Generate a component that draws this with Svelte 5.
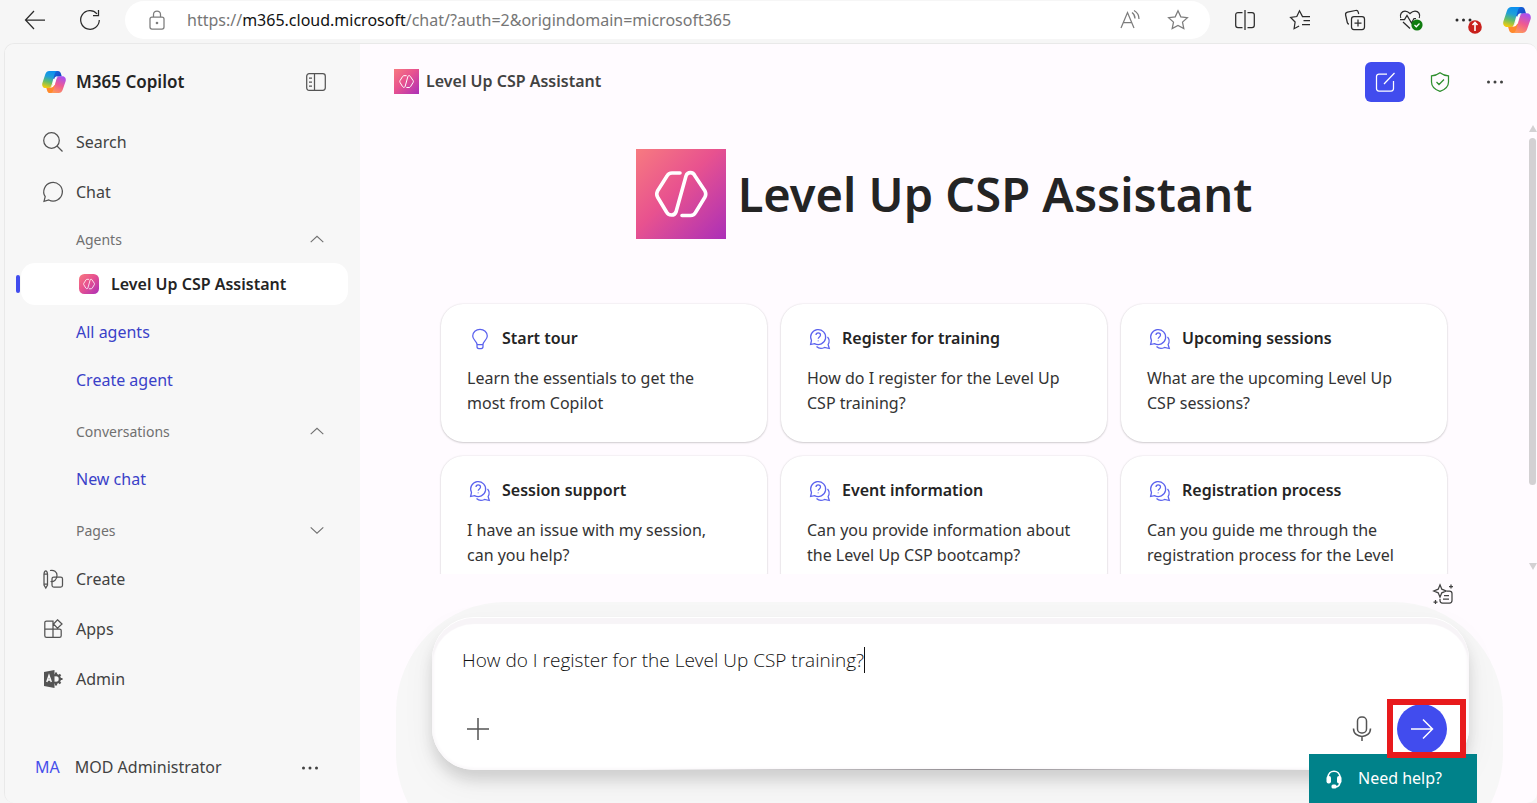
<script>
  let prompt = $state('How do I register for the Level Up CSP training?');

  const cards = [
    { icon: 'bulb', title: 'Start tour', text: 'Learn the essentials to get the most from Copilot' },
    { icon: 'ask', title: 'Register for training', text: 'How do I register for the Level Up CSP training?' },
    { icon: 'ask', title: 'Upcoming sessions', text: 'What are the upcoming Level Up CSP sessions?' },
    { icon: 'ask', title: 'Session support', text: 'I have an issue with my session, can you help?' },
    { icon: 'ask', title: 'Event information', text: 'Can you provide information about the Level Up CSP bootcamp?' },
    { icon: 'ask', title: 'Registration process', text: 'Can you guide me through the registration process for the Level' }
  ];
</script>

{#snippet copilot(id, size)}
  <svg width={size} height={size} viewBox="0 -2 80 80" aria-hidden="true">
    <defs>
      <linearGradient id="{id}a" x1="0.6" y1="0" x2="0.35" y2="1">
        <stop offset="0" stop-color="#0a8ff0" /><stop offset=".35" stop-color="#1f9fd8" />
        <stop offset=".65" stop-color="#62bd6a" /><stop offset="1" stop-color="#f3cb0c" />
      </linearGradient>
      <linearGradient id="{id}b" x1="0.7" y1="0" x2="0.3" y2="1">
        <stop offset="0" stop-color="#a950f0" /><stop offset=".5" stop-color="#ee5a93" /><stop offset="1" stop-color="#ff9a58" />
      </linearGradient>
      <linearGradient id="{id}c" x1="0" y1="0" x2="1" y2="1">
        <stop offset="0" stop-color="#0f6fe0" /><stop offset="1" stop-color="#1b3bbd" />
      </linearGradient>
    </defs>
    <path d="M42 1h11c6 0 8 3 10 9l3 10h-9c-8 0-11 4-13 11l-9-6z" fill="url(#{id}c)" />
    <path d="M38 75H27c-6 0-8-3-10-9l-3-10h9c8 0 11-4 13-11l9 6z" fill="#ff8a2c" />
    <path d="M24 1h28c-6 0-8 5-10 11L32 48c-2 7-5 10-12 10h-8C3 58-1 50 1 42l10-30C14 4 18 1 24 1z" fill="url(#{id}a)" />
    <path d="M56 75H28c6 0 8-5 10-11l10-35c2-7 5-10 12-10h8c9 0 13 8 11 16L69 64c-3 8-7 11-13 11z" fill="url(#{id}b)" />
    <path d="M41 27c2-6 6-9 14-9-6 2-7 7-9 13l-5 16c-2 7-6 10-15 10 6-2 8-7 10-13z" fill="#fff" />
  </svg>
{/snippet}

{#snippet agent(id, size, radius)}
  <svg width={size} height={size} viewBox="0 0 90 90" aria-hidden="true">
    <defs>
      <linearGradient id={id} x1="0" y1="0" x2="1" y2="1">
        <stop offset="0" stop-color="#f77a80" /><stop offset=".45" stop-color="#e8528f" /><stop offset="1" stop-color="#ab2fb8" />
      </linearGradient>
    </defs>
    <rect width="90" height="90" rx={radius} fill="url(#{id})" />
    <path d="M44 24h-8c-2 0-4 1-5 3L21.500 42c-1 2-1 4 0 6l9 15c2 4 8 4 9.500 0L50 27c1.500-4.500 7-4.500 9 0l10 15c1 2 1 4 0 6l-9.500 15.500c-1 2-3 3-5 3H46" fill="none" stroke="#fff" stroke-width="3.600" stroke-linecap="round" stroke-linejoin="round" />
  </svg>
{/snippet}

{#snippet dots()}
  <svg class="icon" viewBox="0 0 20 20" aria-hidden="true"><g fill="currentColor" stroke="none"><circle cx="3.500" cy="10" r="1.500" /><circle cx="10" cy="10" r="1.500" /><circle cx="16.500" cy="10" r="1.500" /></g></svg>
{/snippet}

{#snippet chevron(down)}
  <svg class="icon" viewBox="0 0 20 20" aria-hidden="true"><path d={down ? 'M3 7l7 6.500L17 7' : 'M3 13.500L10 7l7 6.500'} /></svg>
{/snippet}

<div class="window">
  <header class="toolbar">
    <button class="tool" aria-label="Back"><svg class="icon" viewBox="0 0 20 20"><path d="M20 10H1M9 1L.5 10 9 19" /></svg></button>
    <button class="tool" aria-label="Refresh"><svg class="icon" viewBox="0 0 20 20"><path d="M19.300 10A9.300 9.300 0 1 1 17 3.800M18.500 0v5.500H13" /></svg></button>
    <div class="address">
      <svg class="icon grey" viewBox="0 0 20 20" aria-hidden="true"><rect x="3" y="7" width="14" height="12" rx="2" /><path d="M6.500 7V4.500a3.500 3.500 0 0 1 7 0V7" /><circle cx="10" cy="13" r=".7" fill="currentColor" /></svg>
      <span class="url">https://<b>m365.cloud.microsoft</b>/chat/?auth=2&amp;origindomain=microsoft365</span>
      <button class="tool grey" aria-label="Read aloud"><svg class="icon" viewBox="0 0 20 20"><path d="M1 18L7.500 2.500 14 18M3.300 12.500h8.400M12 2.500c2 1.500 3 3.500 3 6M14 .5c3.500 2 5 5 5 8.500" /></svg></button>
      <button class="tool grey" aria-label="Add to favorites"><svg class="icon" viewBox="0 0 20 20"><path d="M10 .8l2.800 6 6.600.8-4.900 4.500 1.300 6.500-5.800-3.200-5.800 3.200 1.300-6.500L.6 7.600l6.600-.8z" /></svg></button>
    </div>
    <button class="tool" aria-label="Split screen"><svg class="icon" viewBox="0 0 20 20"><path d="M10 0v20M7.500 2.500H3a2.300 2.300 0 0 0-2.300 2.300v10.400A2.300 2.300 0 0 0 3 17.500h4.500M12.500 2.500H17a2.300 2.300 0 0 1 2.300 2.300v10.400a2.300 2.300 0 0 1-2.300 2.300h-4.500" /></svg></button>
    <button class="tool" aria-label="Favorites"><svg class="icon" viewBox="0 0 20 20"><path d="M20 6.500h-7.500L9.500.8 6.800 6.500l-6.200 1 4.500 4.500-1 6.700 5-2.700M13.500 10.500H20M12 14.500h8" /></svg></button>
    <button class="tool" aria-label="Collections"><svg class="icon" viewBox="0 0 20 20"><rect x="6.500" y="6.500" width="13" height="13" rx="2.500" /><path d="M13 9.500v7M9.500 13h7M4 14c-1 0-1.500-.6-1.700-1.500L.6 5C.3 3.500 1 2.500 2.500 2.200L10.500.5c1.500-.3 2.500.4 2.800 1.800l.4 1.700" /></svg></button>
    <button class="tool" aria-label="Browser essentials">
      <svg class="icon" viewBox="0 0 20 20"><path d="M.8 8C-.7 4.500 2 1 5 1c2 0 3.500 1 5 2.500C11.500 2 13 1 15 1c3.500 0 5.700 3.500 4.200 7M0 9.500h4.500l2.500-4 4.500 7.500L14 8.500h2M3 12l7 6.500" /><circle cx="17" cy="15" r="5.600" fill="#107c10" stroke="none" /><path d="M14.500 15l1.800 1.800 3.200-3.300" stroke="#fff" /></svg>
    </button>
    <button class="tool" aria-label="Settings and more">
      <svg class="icon" viewBox="0 0 20 20"><g fill="currentColor" stroke="none"><circle cx="2" cy="10" r="1.500" /><circle cx="8.500" cy="10" r="1.500" /><circle cx="15" cy="10" r="1.500" /></g><circle cx="20" cy="17" r="6.800" fill="#c9201c" stroke="none" /><path d="M20 21v-8M17.500 15l2.500-2.500 2.500 2.500" stroke="#fff" stroke-width="1.600" /></svg>
    </button>
    <button class="tool last" aria-label="Copilot">{@render copilot('top', 28)}</button>
  </header>

  <div class="app">
    <nav class="sidebar">
      <div class="brand">
        {@render copilot('side', 24)}
        <strong>M365 Copilot</strong>
        <button class="end" aria-label="Collapse navigation"><svg class="icon" viewBox="0 0 20 20"><rect x=".7" y="1.700" width="18.600" height="16.600" rx="2.500" /><path d="M8.500 2v16M3 6h3M3 10h3M3 14h3" /></svg></button>
      </div>
      <a class="item" href="#search"><svg class="icon" viewBox="0 0 20 20"><circle cx="8.500" cy="8.500" r="7.800" /><path d="M14 14l5.500 5.500" /></svg>Search</a>
      <a class="item" href="#chat"><svg class="icon" viewBox="0 0 20 20"><path d="M1 19.300l1.200-4.600A9.300 9.300 0 1 1 5.800 18z" /></svg>Chat</a>

      <button class="section agents">Agents {@render chevron(false)}</button>
      <a class="active" href="#agent" aria-current="page">{@render agent('g1', 20, 24)}Level Up CSP Assistant</a>
      <a class="sub first" href="#all">All agents</a>
      <a class="sub" href="#create-agent">Create agent</a>
      <button class="section">Conversations {@render chevron(false)}</button>
      <a class="sub" href="#new">New chat</a>
      <button class="section">Pages {@render chevron(true)}</button>

      <a class="item" href="#create"><svg class="icon" viewBox="0 0 20 20"><path d="M1 5v11l1.800 3L4.500 16V5M1 5a1.800 4 0 0 1 3.500 0zM1 15h3.500M7 1.500c4-1 7 1.500 7 5 0 4-3 6.500-6.500 6" /><rect x="9" y="8" width="10.500" height="10" rx="1.800" /></svg>Create</a>
      <a class="item" href="#apps"><svg class="icon" viewBox="0 0 20 20"><path d="M10 10V2H3.500A1.700 1.700 0 0 0 1.800 3.700v13a1.700 1.700 0 0 0 1.700 1.700h13a1.700 1.700 0 0 0 1.700-1.700v-5a1.700 1.700 0 0 0-1.700-1.700H1.800M10 10v8.400M14.500.8l4.500 4.200-4.500 4.200L10.500 5z" /></svg>Apps</a>
      <a class="item" href="#admin">
        <svg class="icon" viewBox="0 0 20 20"><circle cx="13" cy="10" r="4" stroke-width="2" /><path d="M13 3.500v13M19.500 10H13M17.500 5.500L13 10l4.500 4.500" stroke-width="2.200" /><circle cx="13" cy="10" r="2.700" fill="#f7f7f7" stroke="none" /><path d="M1 3L11.500 1v18L1 17z" fill="currentColor" stroke="none" /><path d="M3.800 13l2.200-6.500L8.300 13M4.600 11h3" stroke="#f7f7f7" stroke-width="1.500" /></svg>Admin</a>

      <div class="user">
        <span class="initials">MA</span>
        <span>MOD Administrator</span>
        <button class="end" aria-label="Account options">{@render dots()}</button>
      </div>
    </nav>

    <main>
      <div class="bar">
        {@render agent('g2', 25, 0)}
        <strong>Level Up CSP Assistant</strong>
        <div class="actions">
          <button class="new" aria-label="New chat"><svg class="icon" viewBox="0 0 20 20"><path d="M12 2H4a2.500 2.500 0 0 0-2.500 2.500v12A2.500 2.500 0 0 0 4 19h12a2.500 2.500 0 0 0 2.500-2.500V9M19.500 1L9 12" /></svg></button>
          <button class="shield" aria-label="Enterprise data protection"><svg class="icon" viewBox="0 0 20 20"><path d="M10 .8c2.500 2 5.200 2.900 8.500 3V10c0 4.500-3 7.500-8.500 9.300C4.500 17.500 1.500 14.500 1.500 10V3.800c3.300-.1 6-1 8.500-3zM6.500 10l2.500 2.500L14 7.500" /></svg></button>
          <button aria-label="More options">{@render dots()}</button>
        </div>
      </div>

      <div class="viewport">
        <div class="content">
          <h1>{@render agent('g3', 90, 0)}Level Up CSP Assistant</h1>
          <div class="cards">
            {#each cards as card}
              <button class="card">
                <span class="card-title">
                  {#if card.icon === 'bulb'}
                    <svg class="icon" viewBox="0 0 20 20"><path d="M7 15.500C7 12 2.700 11 2.700 7a7.300 6.600 0 0 1 14.600 0c0 4-4.300 5-4.300 8.500zM7 15.500v2c0 1 .8 2 1.800 2h2.400c1 0 1.800-1 1.800-2v-2" /></svg>
                  {:else}
                    <svg class="icon" viewBox="0 0 20 20"><path d="M.6 15.500l.9-4A7.500 7.500 0 1 1 4.500 14.600zM6 6c0-3 4.500-3 4.500 0 0 2-2.300 1.800-2.300 3.800M8.200 11.500v.8M6.500 17.500c2 2 5 2.500 8 1l4.800 1-1.200-4c1.500-2.500 1.200-5.500-.6-7.500" /></svg>
                  {/if}
                  {card.title}
                </span>
                <span class="card-text">{card.text}</span>
              </button>
            {/each}
          </div>
        </div>
        <div class="scrollbar" aria-hidden="true"><i class="up"></i><i class="thumb"></i><i class="down"></i></div>
      </div>

      <div class="compose-area">
        <button class="prompts" aria-label="View prompts"><svg class="icon" viewBox="0 0 20 20"><path d="M7 .8l1.800 4.400 4.400 1.800-4.400 1.800L7 13.200 5.200 8.800.8 7l4.400-1.800zM18 .5v4M16 2.500h4M2.500 16v4M.5 18h4M14 7h2.500A2.500 2.500 0 0 1 19 9.500v7a2.500 2.500 0 0 1-2.500 2.500h-7A2.500 2.500 0 0 1 7 16.500V15M11 11.500h5M10 15h6" /></svg></button>
        <form class="composer" onsubmit={(e) => e.preventDefault()}>
          <div class="field">
            <input aria-label="Message Copilot" bind:value={prompt} />
            <span class="caret"></span>
          </div>
          <div class="controls">
            <button type="button" aria-label="Add content"><svg class="icon plus" viewBox="0 0 24 24"><path d="M12 1v22M1 12h22" /></svg></button>
            <button type="button" class="mic" aria-label="Dictate"><svg class="icon plus" viewBox="0 0 24 24"><rect x="7.500" y="0" width="9" height="16" rx="4" /><path d="M3.500 11.500c0 10.500 17 10.500 17 0M12 19.500V24" /></svg></button>
            <div class="send-wrap">
              <button class="send" aria-label="Send"><svg class="icon plus" viewBox="0 0 24 24"><path d="M1 12h22M13 2.500L22.500 12 13 21.500" /></svg></button>
              <span class="mark"></span>
            </div>
          </div>
        </form>
        <button class="help">
          <svg class="icon" viewBox="0 0 20 20"><path d="M4 9C4 0 16 0 16 9v3c0 4-2 6-4.500 6" stroke-width="1.600" /><rect x="2.500" y="7" width="4.500" height="7.500" rx="2" fill="currentColor" stroke="none" /><rect x="13" y="7" width="4.500" height="7.500" rx="2" fill="currentColor" stroke="none" /><rect x="7.500" y="15.500" width="5" height="4" rx="1.500" fill="currentColor" stroke="none" /></svg>
          Need help?
        </button>
      </div>
    </main>
  </div>
</div>

<style>
  :global(body) { margin: 0; background: #f6f6f6; }
  .window, .window * { box-sizing: border-box; }
  .window {
    display: flex;
    flex-direction: column;
    height: 100vh;
    font: 16px/25px "Noto Sans", "Open Sans", sans-serif;
    color: #424242;
    overflow: hidden;
  }
  button, input { font: inherit; color: inherit; background: none; border: 0; padding: 0; margin: 0; }
  button { display: flex; align-items: center; justify-content: center; cursor: pointer; }
  a { text-decoration: none; color: inherit; }
  strong, b { font-weight: 600; }
  svg { flex: none; display: block; overflow: visible; }
  .icon { width: 20px; height: 20px; fill: none; stroke: currentColor; stroke-width: 1.25; }
  .icon.plus { width: 24px; height: 24px; stroke-width: 1.5; }

  .toolbar { display: flex; align-items: center; gap: 27px; height: 43px; padding: 0 6px 3px 21px; color: #2b2b2b; }
  .tool { width: 28px; height: 28px; flex: none; }
  .tool.last { margin-left: -3px; }
  .grey { color: #7c7c7c; }
  .address {
    flex: 1;
    min-width: 0;
    display: flex;
    align-items: center;
    height: 38px;
    margin: 0 -6px 0 -6px;
    padding: 0 18px 0 22px;
    gap: 20px;
    border-radius: 20px;
    background: #fff;
  }
  .url { flex: 1; min-width: 0; overflow: hidden; white-space: nowrap; color: #767676; }
  .url b { font-weight: 400; color: #111; }

  .app {
    flex: 1;
    min-height: 0;
    display: flex;
    margin-left: 4px;
    border: 1px solid #e9e9e9;
    border-right: 0;
    border-bottom: 0;
    border-radius: 10px;
    overflow: hidden;
  }

  .sidebar { width: 355px; flex: none; display: flex; flex-direction: column; background: #f7f7f7; }
  .brand, .item, .user { display: flex; align-items: center; }
  .brand { height: 73px; padding: 2px 34px 0 37px; gap: 10px; color: #242424; font-size: 17px; }
  .brand .icon, .item .icon { color: #545454; }
  .end { margin-left: auto; }
  .item { height: 50px; padding-left: 38px; gap: 13px; }
  .section { height: 48px; margin-top: 3px; padding: 0 34px 0 71px; justify-content: space-between; font-size: 14px; color: #707070; }
  .section.agents { height: 44px; margin: 0 0 2px; }
  .active {
    position: relative;
    display: flex;
    align-items: center;
    gap: 12px;
    height: 42px;
    margin: 0 12px 0 16px;
    padding-left: 58px;
    border-radius: 14px;
    background: #fff;
    color: #242424;
    font-weight: 600;
  }
  .active::before { content: ""; position: absolute; left: -5px; top: 12px; width: 4px; height: 18px; border-radius: 2px; background: #414cee; }
  .sub { height: 48px; padding-left: 71px; line-height: 48px; color: #3a41c8; }
  .sub.first { margin-top: 3px; }
  .section .icon { width: 18px; height: 18px; }
  .user { margin: auto 0 0; padding: 0 40px 23px 30px; gap: 15px; }
  .initials { color: #464feb; }

  main { position: relative; flex: 1; min-width: 0; display: flex; flex-direction: column; background: #fffbff; }
  .bar { flex: none; display: flex; align-items: center; height: 75px; gap: 7px; padding: 0 22px 0 34px; }
  .actions { margin-left: auto; display: flex; gap: 15px; }
  .actions button { width: 40px; height: 40px; border-radius: 6px; }
  .actions .new { background: #414cee; color: #fff; }
  .actions .shield { color: #2f8f2f; }

  .viewport { flex: 1; min-height: 0; display: flex; }
  .content { flex: 1; min-width: 0; overflow: hidden; padding: 30px 81px 0; }
  h1 { display: flex; align-items: center; justify-content: center; gap: 12px; margin: 0 0 65px; font-size: 47px; line-height: 90px; font-weight: 600; color: #242424; white-space: nowrap; }
  .cards { display: grid; grid-template-columns: repeat(3, 1fr); gap: 14px; }
  .card {
    flex-direction: column;
    align-items: stretch;
    justify-content: flex-start;
    min-height: 138px;
    padding: 22px 34px 26px 26px;
    border-radius: 22px;
    background: #fff;
    box-shadow: 0 0 2px rgba(0, 0, 0, .12), 0 1px 2px rgba(0, 0, 0, .16);
    text-align: left;
    color: #333;
  }
  .card-title { display: flex; align-items: center; gap: 12px; margin-bottom: 15px; padding-left: 3px; font-weight: 600; color: #242424; }
  .card-title .icon { color: #5b62ee; }

  .scrollbar { width: 9px; flex: none; display: flex; flex-direction: column; align-items: center; padding: 6px 0 4px; gap: 6px; }
  .scrollbar i { border: 4px solid transparent; }
  .scrollbar .up { border-top: 0; border-bottom: 7px solid #d3d1d3; }
  .scrollbar .down { border-bottom: 0; border-top: 7px solid #d3d1d3; margin-top: auto; }
  .scrollbar .thumb { width: 7px; height: 78%; border: 0; border-radius: 4px; background: #d3d1d3; }

  .compose-area { position: relative; flex: none; padding: 10px 68px 33px 72px; }
  .compose-area::before { content: ""; position: absolute; inset: 28px 34px -60px 36px; border-radius: 110px; background: #f7f7f7; }
  .prompts { margin: 0 16px 0 auto; }
  .composer {
    position: relative;
    display: flex;
    flex-direction: column;
    justify-content: space-between;
    height: 152px;
    margin-top: 14px;
    padding: 26px 22px 16px 30px;
    border-radius: 42px;
    background: #fff;
    box-shadow: inset 0 6px 1px #f7f4f7, inset 0 0 3px 2px #faf8fa, 0 -1px 0 #fff, 0 10px 14px rgba(0, 0, 0, .12), 0 12px 34px rgba(0, 0, 0, .06);
  }
  .composer::after { content: ""; position: absolute; left: 20%; right: 15%; bottom: 0; height: 1px; background: linear-gradient(90deg, transparent, #8f8b8f 50%, transparent); }
  .field { display: flex; align-items: center; height: 32px; }
  .field input { field-sizing: content; max-width: 100%; outline: 0; font: 300 19px/28px "Open Sans", "Noto Sans", sans-serif; color: #111; }
  .caret { width: 1px; height: 26px; background: #111; }
  .controls { display: flex; align-items: center; height: 50px; padding-left: 4px; color: #545454; }
  .mic { margin-left: auto; margin-right: 23px; }
  .send-wrap { position: relative; z-index: 2; }
  .send { width: 50px; height: 50px; border-radius: 50%; background: #414cee; color: #fff; }
  .mark { position: absolute; inset: -5px -19px -4px -10px; border: 6px solid #e81a1c; pointer-events: none; }
  .help { position: absolute; right: 60px; bottom: 0; z-index: 1; width: 168px; height: 49px; padding-left: 15px; gap: 14px; justify-content: flex-start; background: #00828a; color: #fff; }
</style>
